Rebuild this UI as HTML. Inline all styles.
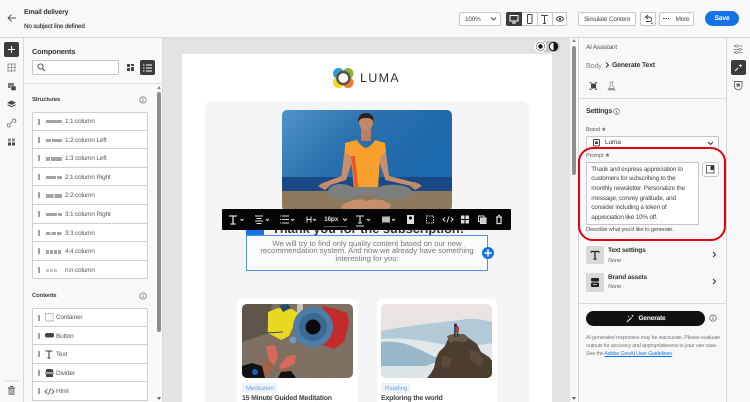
<!DOCTYPE html>
<html><head><meta charset="utf-8"><style>
html,body{margin:0;padding:0;width:750px;height:402px;overflow:hidden;background:#f8f8f8}
body{position:relative;font-family:"Liberation Sans",sans-serif;color:#2c2c2c;text-rendering:geometricPrecision;letter-spacing:-.2px}
.a{position:absolute;white-space:nowrap}
.t{position:absolute;white-space:nowrap;font-size:6.6px;line-height:10px;color:#444}
.b{font-weight:bold}
.row{position:absolute;left:32px;width:116px;height:18.6px;box-sizing:border-box;background:#fff;border:1px solid #cfcfcf;border-top:0}
.gr{position:absolute;left:5px;top:6px;width:2px;height:6px;background:#a0a0a0}
.bar{position:absolute;left:13px;top:8px;height:3.4px;width:15.5px;background:#a4a4a4}
.row span{position:absolute;top:5px;font-size:6.4px;line-height:10px;color:#555;white-space:nowrap;letter-spacing:-.15px}
.btn{position:absolute;box-sizing:border-box;border:1px solid #c6c6c6;border-radius:3px;background:#fff;font-size:6.4px;color:#444;text-align:center;line-height:13px;white-space:nowrap}
svg{position:absolute;overflow:visible}
</style></head><body>

<!-- canvas -->
<div class="a" style="left:163px;top:38px;width:415px;height:364px;background:#e3e3e3"></div>
<div class="a" style="left:182px;top:54px;width:370px;height:348px;background:#fff"></div>
<div class="a" style="left:205px;top:101px;width:324px;height:301px;background:#f5f5f5;border-radius:7px 7px 0 0"></div>

<!-- logo -->
<svg style="left:0;top:0" width="750" height="402" viewBox="0 0 750 402">
<circle cx="338.500" cy="73.500" r="5.500" fill="#2a9bd8"/>
<circle cx="348" cy="73.500" r="5.500" fill="#8fb23c"/>
<circle cx="348" cy="82.500" r="5.500" fill="#ee7b30"/>
<circle cx="338.500" cy="82.500" r="5.500" fill="#f3d91a"/>
<circle cx="343.300" cy="78" r="6" fill="none" stroke="#5a5048" stroke-width="2.400"/>
<circle cx="343.300" cy="78" r="4.800" fill="#fff"/>
</svg>
<div class="a" style="left:360px;top:70px;font-size:12.500px;line-height:16px;letter-spacing:1.300px;color:#333">LUMA</div>

<!-- hero -->
<svg style="left:282px;top:110px;border-radius:5px" width="170" height="101" viewBox="282 110 170 101">
<defs><linearGradient id="s" x1="0" y1="0" x2="1" y2="0.4"><stop offset="0" stop-color="#4f93c7"/><stop offset="0.5" stop-color="#2a70ad"/><stop offset="1" stop-color="#1c68ac"/></linearGradient>
<clipPath id="hc"><rect x="282" y="110" width="170" height="101" rx="5"/></clipPath></defs>
<g clip-path="url(#hc)">
<rect x="282" y="110" width="170" height="68" fill="url(#s)"/>
<rect x="282" y="177" width="170" height="15" fill="#1a4a86"/>
<rect x="282" y="191" width="170" height="20" fill="#8d7a5c"/>
<path d="M345 146l-3.500 30-21 8 .5 4 25-8 6-18 1-14zM385 146l4 30 31 8-.5 4-34-8-6-18-1-14z" fill="#c88f6c"/>
<path d="M318 186l7-4 6 3-6 5zM422 186l-7-4-6 3 6 5z" fill="#c58a68"/>
<rect x="361" y="128" width="10" height="13" fill="#b87f5f"/>
<ellipse cx="366" cy="122" rx="7" ry="8.500" fill="#c08868"/>
<path d="M358.500 122c-1-6 3-9 7.500-9s8.500 3 7.500 9c-1.500-3-3-4-7.500-4s-6 1-7.500 4z" fill="#2d211c"/>
<path d="M345 143l12-3c2 4 6 7 9 8 3-1 7-4 9-8l10 3 1 9-6 5-2 32h-24l-3-32-6-5z" fill="#f9a02c"/>
<path d="M351 156l4 31h3l-3-31z" fill="#e8562a"/>
<path d="M352 187c-8-5-23-4-24 5-1 7 8 9 25 6l13-3 13 3c17 3 34 1 33-6-1-8-25-9-33-5z" fill="#7d7f7c"/>
<path d="M341 206c10-7 20-8 26-5 8-3 17-2 24 4l-3 6h-44z" fill="#c88f6c"/>
</g></svg>

<!-- heading + selected text -->
<div class="a" style="left:272px;top:219.600px;width:191px;font-size:12.800px;line-height:18px;font-weight:bold;color:#333;text-align:center;letter-spacing:0">Thank you for the subscription!</div>
<div class="a" style="left:246px;top:229px;width:18px;height:6px;background:#1473e6"></div>
<div class="a" style="left:246px;top:235px;width:242px;height:36px;box-sizing:border-box;border:1.200px solid #4f90e6;background:#fbfbfb"></div>
<div class="a" style="left:246px;top:239.500px;width:242px;font-size:7.700px;line-height:7.600px;color:#777;text-align:center;letter-spacing:0;white-space:normal"><div>We will try to find only quality content based on our new</div><div>recommendation system. And now we already have something</div><div>interesting for you:</div></div>
<svg style="left:482px;top:247px" width="12" height="12" viewBox="0 0 12 12"><circle cx="6" cy="6" r="6" fill="#1473e6"/><path d="M6 2.500v7M2.500 6h7" stroke="#fff" stroke-width="1.500"/></svg>

<!-- toolbar -->
<div class="a" style="left:222px;top:209px;width:289px;height:21px;background:#050505;border-radius:1px"></div>
<svg style="left:0;top:0" width="750" height="402" viewBox="0 0 750 402">
<g fill="none" stroke="#ddd" stroke-width="1">
<path d="M229 216h8M233 216v8M230.500 224h5" stroke-width="1.300"/>
<path d="M240.500 219l1.500 1.500 1.500-1.500M266 219l1.500 1.500 1.500-1.500M291 219l1.500 1.500 1.500-1.500M313 219l1.500 1.500 1.500-1.500M343 218.500l2 2 2-2M367 219l1.500 1.500 1.500-1.500M392 219l1.500 1.500 1.500-1.500"/>
<path d="M255 216h8M256.500 218.500h5M255 221h8M256.500 223.500h5"/>
<path d="M282 216h7M282 219.500h7M282 223h7M280 216h1M280 219.500h1M280 223h1"/>
<path d="M307 216.500v6M311 216.500v6M307 219.500h4"/>
<path d="M324 226.500h23" stroke="#555"/>
<path d="M356 216h8M360 216v7M358 223h4M356 226h8" stroke-width="1.100"/>
<rect x="382" y="216.500" width="8" height="6" fill="#bbb" stroke="none"/>
<rect x="407" y="215" width="7" height="9" fill="#ddd" stroke="none"/><circle cx="410.500" cy="218" r="1.500" fill="#000" stroke="none"/>
<rect x="426.500" y="216" width="7" height="7" stroke-dasharray="1.500 1"/>
<path d="M445 217.500l-2 2 2 2M451 217.500l2 2-2 2M449 216.500l-2 6"/>
<g fill="#ddd" stroke="none"><rect x="461" y="215.500" width="3.500" height="3.500"/><rect x="465.500" y="215.500" width="3.500" height="3.500"/><rect x="461" y="220" width="3.500" height="3.500"/><rect x="465.500" y="220" width="3.500" height="3.500"/></g>
<rect x="478.500" y="216" width="5.500" height="5.500"/><rect x="480.500" y="218" width="5.500" height="5.500" fill="#ccc"/>
<path d="M496 217h6M497 217.500v6h4v-6M498 215.500h2" stroke-width="1.200"/>
</g></svg>
<div class="a" style="left:324px;top:215px;font-size:6.600px;line-height:10px;font-weight:bold;color:#ddd">16px</div>

<!-- cards -->
<div class="a" style="left:237px;top:299px;width:121px;height:103px;background:#fff;border-radius:5px 5px 0 0"></div>
<div class="a" style="left:377px;top:299px;width:120px;height:103px;background:#fff;border-radius:5px 5px 0 0"></div>
<svg style="left:242px;top:304px" width="111" height="74" viewBox="242 304 111 74">
<defs><clipPath id="c1"><rect x="242" y="304" width="111" height="74" rx="5"/></clipPath></defs>
<g clip-path="url(#c1)">
<rect x="242" y="304" width="111" height="74" fill="#7d7063"/>
<path d="M242 304h30l-6 30-24 8z" fill="#5f554b"/>
<path d="M268 312l10-4 14 1 6 4-3 10-6 13-8 4-13-7z" fill="#e8d820"/>
<path d="M279 305l9-1 3 4-8 4z" fill="#2b4a6b"/>
<rect x="297" y="304" width="6" height="10" fill="#c8c8b8"/>
<path d="M266 333l17-1" stroke="#26456b" stroke-width="1"/>
<circle cx="293" cy="340" r="3.500" fill="#6d9cc0"/>
<path d="M322 306l14 3 11 4 2 10-5 19-10 7-12-4 6-15z" fill="#c42a2a"/>
<circle cx="313" cy="327" r="20" fill="#4b7ea8"/>
<circle cx="313" cy="327" r="14" fill="#3b6a90"/>
<circle cx="313" cy="327" r="7.500" fill="#0a0a0a"/>
<path d="M266 346l9-1 3 12-4 8-5-4zM296 355l-9 1-8 11 4 4 12-8z" fill="#d9695a"/>
<path d="M262 362l9 0 3 6-8 10h-8zM282 369l5-2 4 3-3 8h-9z" fill="#a26449"/>
<path d="M242 366l10-3 10 3 3 12h-23zM278 378l3-6 10-1 5 7z" fill="#121212"/>
<circle cx="255" cy="372" r="3" fill="#1a62b8"/>
</g>
</svg>
<svg style="left:381px;top:304px" width="111" height="74" viewBox="381 304 111 74">
<defs><clipPath id="c3"><rect x="381" y="304" width="111" height="74" rx="5"/></clipPath><linearGradient id="g2" x1="0" y1="0" x2="0" y2="1"><stop offset="0" stop-color="#ebe4e0"/><stop offset="1" stop-color="#e3e2e0"/></linearGradient></defs>
<g clip-path="url(#c3)">
<rect x="381" y="304" width="111" height="74" fill="url(#g2)"/>
<path d="M381 331c15-3 30-5 45-7 14-2 30-3 40-5 10-1 18 1 26 3v24h-111z" fill="#b2cad8"/>
<path d="M381 339c20-2 40 1 60 5 20 3 36 2 51-1v20h-111z" fill="#e0e7e9"/>
<path d="M381 342c10-1 18 0 28 3 10 4 22 10 32 15l-20 8-40-2z" fill="#98b8ca"/>
<rect x="381" y="366" width="60" height="12" fill="#dde4e6"/>
<path d="M427 378l4-5 3-5 2-10 3-6 6-6 3-7 7-4 9 0 6 4 7 5 4 8 8 5 4 5v16z" fill="#4c3d31"/>
<path d="M447 336l6-2 11 0 5 4-4 4-10-1-5 2z" fill="#6a5a4a"/>
<path d="M470 350l8 2 6 8-5 6-9-6zM442 355l10 3-3 10-8-1z" fill="#5c4a3a"/>
<rect x="454" y="326" width="4" height="7" fill="#2d4f78"/>
<rect x="456" y="327" width="3" height="5" fill="#b5403a"/>
<circle cx="455.500" cy="325" r="1.500" fill="#3a2b22"/>
<path d="M454 333h1.500v4h-1.500zM457 333h1.500v4h-1.500z" fill="#333"/>
</g></svg>
<div class="a" style="left:242px;top:383px;width:35px;height:10px;background:#eef3fb;border-radius:2px"></div>
<div class="a" style="left:246px;top:383.500px;font-size:6px;line-height:10px;color:#6d9fe0;letter-spacing:0">Meditation</div>
<div class="a" style="left:381px;top:383px;width:29px;height:10px;background:#eef3fb;border-radius:2px"></div>
<div class="a" style="left:385px;top:383.500px;font-size:6px;line-height:10px;color:#6d9fe0;letter-spacing:0">Reading</div>
<div class="a" style="left:242px;top:393.500px;font-size:7px;line-height:10px;font-weight:bold;color:#444">15 Minute Guided Meditation</div>
<div class="a" style="left:381px;top:393.500px;font-size:7px;line-height:10px;font-weight:bold;color:#444">Exploring the world</div>

<!-- theme toggle -->
<div class="a" style="left:538px;top:41px;width:22px;height:11px;background:#c4c4c4;border-radius:6px"></div>
<svg style="left:534px;top:40px" width="28" height="13" viewBox="0 0 28 13"><circle cx="6.500" cy="6.500" r="6" fill="#fff"/><circle cx="6.500" cy="6.500" r="2.200" fill="#111"/><circle cx="6.500" cy="6.500" r="4.200" fill="none" stroke="#222" stroke-width="1" stroke-dasharray="1 1.200"/><circle cx="19.500" cy="6.500" r="4.200" fill="#f3f3f3" stroke="#111"/><path d="M19.500 2.300a4.200 4.200 0 0 1 0 8.400z" fill="#111"/></svg>

<!-- canvas scrollbar -->
<div class="a" style="left:570px;top:38px;width:8px;height:364px;background:#f8f8f8"></div>
<div class="a" style="left:572px;top:46px;width:4px;height:129px;background:#8e8e8e;border-radius:2px"></div>
<div class="a" style="left:572px;top:39px;border:2px solid transparent;border-bottom:3px solid #888;border-top:0"></div>
<div class="a" style="left:572px;top:397px;border:2px solid transparent;border-top:3px solid #666;border-bottom:0"></div>

<!-- header -->
<div class="a" style="left:0;top:0;width:750px;height:38px;background:#f8f8f8;border-bottom:1px solid #d8d8d8;box-sizing:border-box"></div>
<svg style="left:7px;top:13px" width="10" height="10" viewBox="0 0 10 10"><path d="M9 5H1M4.500 1.500L1 5l3.500 3.500" fill="none" stroke="#555" stroke-width=".9"/></svg>
<div class="t b" style="left:24px;top:8px;font-size:7px;color:#333">Email delivery</div>
<div class="t" style="left:24px;top:21.500px;font-size:6.300px;color:#333;letter-spacing:-.13px;-webkit-text-stroke:.15px #333">No subject line defined</div>

<div class="btn" style="left:459px;top:12px;width:42px;height:14px;text-align:left;padding-left:5px;border-radius:2px">100%</div>
<svg style="left:490px;top:17px" width="7" height="4" viewBox="0 0 7 4"><path d="M1 .5l2.500 2.500L6 .5" fill="none" stroke="#444" stroke-width=".9"/></svg>

<div class="a" style="left:506px;top:12px;width:61px;height:14px;box-sizing:border-box;background:#fff;border:1px solid #c6c6c6;border-radius:2px"></div>
<div class="a" style="left:506px;top:12px;width:16px;height:14px;background:#3c3c3c;border-radius:2px 0 0 2px"></div>
<div class="a" style="left:537px;top:12px;width:1px;height:14px;background:#c6c6c6"></div>
<div class="a" style="left:552px;top:12px;width:1px;height:14px;background:#c6c6c6"></div>
<svg style="left:0;top:0" width="750" height="402" viewBox="0 0 750 402">
<rect x="510" y="15.500" width="8" height="5.500" fill="none" stroke="#fff" stroke-width="1"/><path d="M512 23h4M514 21v2" stroke="#fff"/>
<rect x="527.500" y="14.500" width="4.500" height="9" rx=".7" fill="none" stroke="#444"/>
<path d="M541 15.500h7M544.500 15.500v8M543 23.500h3" stroke="#444" fill="none" stroke-width="1"/>
<path d="M556.500 19c1-2 2.500-2.500 3.500-2.500s2.500.5 3.500 2.500c-1 1.800-2.500 2.300-3.500 2.300s-2.500-.5-3.500-2.300z" fill="none" stroke="#444"/><circle cx="560" cy="19" r="1.200" fill="#444"/>
</svg>

<div class="btn" style="left:578px;top:12px;width:58px;height:14px;border-radius:2px">Simulate Content</div>
<div class="btn" style="left:640px;top:12px;width:16px;height:14px;border-radius:2px"></div>
<svg style="left:643px;top:14px" width="11" height="11" viewBox="0 0 11 11"><path d="M5 1L2.500 3 5 5M2.500 3H6c2 0 2.500 1.300 2.500 2.500S8 7.500 6 7.500H3" fill="none" stroke="#444" stroke-width=".9"/><path d="M8 9.200h2" stroke="#444"/></svg>
<div class="btn" style="left:659px;top:12px;width:35px;height:14px;border-radius:2px;padding-left:12px">More</div>
<div class="a" style="left:663px;top:18px;width:6px;height:1.400px;background:repeating-linear-gradient(90deg,#444 0 1.400px,transparent 1.400px 2.400px)"></div>
<div class="a" style="left:705px;top:11px;width:34px;height:15px;background:#1473e6;border-radius:8px;color:#fff;font-size:6.800px;font-weight:bold;line-height:15px;text-align:center">Save</div>

<!-- left rail -->
<div class="a" style="left:0;top:38px;width:24px;height:364px;background:#f8f8f8;border-right:1px solid #d8d8d8;box-sizing:border-box"></div>
<div class="a" style="left:4px;top:42px;width:15px;height:15px;background:#3c3c3c;border-radius:2px"></div>
<svg style="left:0;top:0" width="24" height="402" viewBox="0 0 24 402">
<path d="M11.500 46v7M8 49.500h7" stroke="#fff" stroke-width="1.100"/>
<rect x="8" y="64" width="7" height="7" fill="none" stroke="#888" stroke-width=".9"/><path d="M11.500 64v7M8 67.500h7" stroke="#888" stroke-width=".7"/>
<rect x="8" y="83" width="6" height="5" fill="#777"/><rect x="11" y="86" width="5" height="4.500" fill="#444" stroke="#f8f8f8" stroke-width=".5"/>
<path d="M11.500 100.500l4.500 2.200-4.500 2.200-4.500-2.200zM7 105l4.500 2.200L16 105l-1.200-.6-3.300 1.700-3.300-1.700z" fill="#444"/>
<path d="M9 125l4-4M8.500 123l-.8.800a1.800 1.800 0 0 0 2.600 2.600l.8-.8M14.500 123l.8-.8a1.800 1.800 0 0 0-2.600-2.600l-.8.800" fill="none" stroke="#777" stroke-width=".9"/>
<g fill="#444"><rect x="8" y="138.500" width="3" height="3" fill="#888"/><rect x="12" y="138.500" width="3" height="3" fill="#888"/><rect x="8" y="142.500" width="3" height="3"/><rect x="12" y="142.500" width="3" height="3"/></g>
<path d="M4 381h15" stroke="#ddd"/>
<rect x="8.500" y="388" width="6" height="7" fill="#999"/><path d="M8 388h7M10 386.500h3" stroke="#555"/><path d="M10 390h3M10 392h3" stroke="#fff" stroke-width=".6"/>
</svg>

<!-- components panel -->
<div class="a" style="left:24px;top:38px;width:139px;height:364px;background:#f9f9f9;border-right:1px solid #d8d8d8;box-sizing:border-box"></div>
<div class="t b" style="left:32px;top:46.700px;font-size:7.400px;color:#333">Components</div>
<div class="a" style="left:32px;top:60px;width:87px;height:15px;box-sizing:border-box;background:#fff;border:1px solid #c6c6c6;border-radius:2px"></div>
<svg style="left:37px;top:63px" width="9" height="9" viewBox="0 0 9 9"><circle cx="3.500" cy="3.500" r="2.600" fill="none" stroke="#444" stroke-width=".9"/><path d="M5.500 5.500L8 8" stroke="#444" stroke-width="1"/></svg>
<svg style="left:126px;top:63px" width="9" height="9" viewBox="0 0 9 9"><g fill="#444"><rect x="1" y="1" width="3" height="3"/><rect x="5" y="1" width="3" height="2"/><rect x="1" y="5" width="3" height="3"/><rect x="5" y="4" width="3" height="4"/></g></svg>
<div class="a" style="left:140px;top:60px;width:15px;height:15px;background:#3c3c3c;border-radius:2px"></div>
<svg style="left:143px;top:63.500px" width="9" height="8" viewBox="0 0 9 8"><path d="M0 1h1.500M3 1h6M0 4h1.500M3 4h6M0 7h1.500M3 7h6" stroke="#fff" stroke-width="1.100"/></svg>
<div class="a" style="left:24px;top:83px;width:138px;height:1px;background:#e0e0e0"></div>
<div class="t b" style="left:32px;top:95px;font-size:6px;color:#444">Structures</div>
<svg style="left:139px;top:96px" width="8" height="8" viewBox="0 0 8 8"><circle cx="4" cy="4" r="3.200" fill="none" stroke="#666" stroke-width=".7"/><path d="M4 3.500v2.500" stroke="#666" stroke-width=".8"/><circle cx="4" cy="2.300" r=".5" fill="#666"/></svg>
<div class="a" style="left:157px;top:92px;width:4px;height:240px;background:#8e8e8e;border-radius:2px"></div>
<div class="a" style="left:157px;top:86px;border:2px solid transparent;border-bottom:3px solid #888;border-top:0"></div>
<div class="a" style="left:157px;top:397px;border:2px solid transparent;border-top:3px solid #666;border-bottom:0"></div>

<div class="row" style="top:112px;border-top:1px solid #cfcfcf;border-radius:2px 2px 0 0"><i class="gr"></i><i class="bar" style="top:7px"></i><span style="left:32px;top:4px">1:1 column</span></div>
<div class="row" style="top:130.600px"><i class="gr"></i><i class="bar" style="background:linear-gradient(90deg,#a4a4a4 0 5px,#fff 5px 6px,#a4a4a4 6px)"></i><span style="left:32px">1:2 column Left</span></div>
<div class="row" style="top:149.200px"><i class="gr"></i><i class="bar" style="background:linear-gradient(90deg,#a4a4a4 0 4px,#fff 4px 5px,#a4a4a4 5px)"></i><span style="left:32px">1:3 column Left</span></div>
<div class="row" style="top:167.800px"><i class="gr"></i><i class="bar" style="background:linear-gradient(90deg,#a4a4a4 0 10px,#fff 10px 11px,#a4a4a4 11px)"></i><span style="left:32px">2:1 column Right</span></div>
<div class="row" style="top:186.400px"><i class="gr"></i><i class="bar" style="background:linear-gradient(90deg,#a4a4a4 0 7.300px,#fff 7.300px 8.300px,#a4a4a4 8.300px)"></i><span style="left:32px">2:2 column</span></div>
<div class="row" style="top:205px"><i class="gr"></i><i class="bar" style="background:linear-gradient(90deg,#a4a4a4 0 11px,#fff 11px 12px,#a4a4a4 12px)"></i><span style="left:32px">3:1 column Right</span></div>
<div class="row" style="top:223.600px"><i class="gr"></i><i class="bar" style="background:repeating-linear-gradient(90deg,#a4a4a4 0 4.500px,#fff 4.500px 5.500px)"></i><span style="left:32px">3:3 column</span></div>
<div class="row" style="top:242.200px"><i class="gr"></i><i class="bar" style="background:repeating-linear-gradient(90deg,#a4a4a4 0 3px,#fff 3px 4px)"></i><span style="left:32px">4:4 column</span></div>
<div class="row" style="top:260.800px;border-radius:0 0 2px 2px"><i class="gr"></i><i class="bar" style="width:12px;background:repeating-linear-gradient(90deg,#c8c8c8 0 3px,#fff 3px 4px)"></i><span style="left:32px">n:n column</span></div>

<div class="t b" style="left:32px;top:291px;font-size:6px;color:#444">Contents</div>
<svg style="left:139px;top:292px" width="8" height="8" viewBox="0 0 8 8"><circle cx="4" cy="4" r="3.200" fill="none" stroke="#666" stroke-width=".7"/><path d="M4 3.500v2.500" stroke="#666" stroke-width=".8"/><circle cx="4" cy="2.300" r=".5" fill="#666"/></svg>
<div class="row" style="top:308px;border-top:1px solid #cfcfcf;border-radius:2px 2px 0 0"><i class="gr"></i><span style="left:23px;top:4px">Container</span></div>
<div class="row" style="top:326.600px"><i class="gr"></i><span style="left:23px">Button</span></div>
<div class="row" style="top:345.200px"><i class="gr"></i><span style="left:23px">Text</span></div>
<div class="row" style="top:363.800px"><i class="gr"></i><span style="left:23px">Divider</span></div>
<div class="row" style="top:382.400px"><i class="gr"></i><span style="left:23px">Html</span></div>
<svg style="left:0;top:0" width="170" height="402" viewBox="0 0 170 402">
<rect x="45.500" y="313.500" width="7.500" height="7.500" fill="none" stroke="#666" stroke-width=".7" stroke-dasharray="1.300 1"/>
<rect x="45" y="333" width="9" height="4.500" rx="2" fill="#444"/>
<path d="M45.500 351h7M49 351v7M47.500 358h3" fill="none" stroke="#333" stroke-width="1"/>
<path d="M46.500 369h6l1 3h-8z" fill="#444"/><path d="M45 373h9" stroke="#444"/><rect x="46" y="374" width="7" height="3" fill="#444"/>
<path d="M47.500 389l-2.500 2.500 2.500 2.500M51.500 389l2.500 2.500-2.500 2.500M50.500 388.500l-2 6" fill="none" stroke="#444" stroke-width=".8"/>
</svg>

<!-- right panel -->
<div class="a" style="left:578px;top:38px;width:149px;height:364px;background:#f8f8f8;border-left:1px solid #d4d4d4;border-right:1px solid #d4d4d4;box-sizing:border-box"></div>
<div class="a" style="left:727px;top:38px;width:23px;height:364px;background:#f8f8f8"></div>
<div class="t" style="left:586px;top:42.500px;font-size:6.400px;color:#555">AI Assistant</div>
<div class="t" style="left:586px;top:60.500px;font-size:7.200px;color:#888">Body</div>
<svg style="left:605px;top:62px" width="5" height="6" viewBox="0 0 5 6"><path d="M1 .5l2.500 2.500L1 5.500" fill="none" stroke="#333" stroke-width="1"/></svg>
<div class="t b" style="left:612px;top:60.500px;font-size:6.900px;color:#333">Generate Text</div>
<svg style="left:0;top:0" width="750" height="402" viewBox="0 0 750 402">
<path d="M590 83.500v-1h1.500M595 82.500h1.500v1M596.500 88.500v1h-1.500M591.500 89.500H590v-1" fill="none" stroke="#444" stroke-width=".8"/><rect x="591" y="83.500" width="5" height="5" fill="#444"/>
<path d="M609.500 82h4M610.500 82v3l-2.500 5h7l-2.500-5v-3" fill="none" stroke="#999" stroke-width=".8"/><path d="M609 88l-1 2h7l-1-2z" fill="#999"/>
</svg>
<div class="a" style="left:579px;top:98px;width:147px;height:1px;background:#dcdcdc"></div>

<svg style="left:0;top:0" width="750" height="402" viewBox="0 0 750 402">
<path d="M733.500 46h9M733.500 49.500h9M733.500 52.500h9" stroke="#777" stroke-width=".8"/><rect x="735.500" y="45" width="2" height="2" fill="#f8f8f8" stroke="#777" stroke-width=".6"/><rect x="739" y="48.500" width="2" height="2" fill="#f8f8f8" stroke="#777" stroke-width=".6"/><rect x="735.500" y="51.500" width="2" height="2" fill="#f8f8f8" stroke="#777" stroke-width=".6"/>
<rect x="731" y="60" width="15" height="15" rx="2" fill="#3c3c3c"/>
<path d="M735 71l3-3" stroke="#fff" stroke-width="1.100"/><path d="M740.500 63.500l.6 1.500 1.500.6-1.500.6-.6 1.500-.6-1.500-1.500-.6 1.500-.6z" fill="#fff"/>
<path d="M734.500 81.500h7.500v5c0 1.800-2 3-3.750 3.500-1.750-.5-3.750-1.700-3.750-3.500z" fill="none" stroke="#666" stroke-width=".9"/><rect x="736.500" y="83.500" width="3.500" height="3" fill="#666"/>
</svg>

<div class="t b" style="left:586px;top:106.500px;font-size:7px;color:#333">Settings</div>
<svg style="left:613px;top:108px" width="7" height="7" viewBox="0 0 7 7"><circle cx="3.500" cy="3.500" r="2.800" fill="none" stroke="#666" stroke-width=".6"/><path d="M3.500 3v2.300" stroke="#666" stroke-width=".7"/><circle cx="3.500" cy="1.900" r=".4" fill="#666"/></svg>
<div class="t" style="left:586px;top:125px;font-size:5.600px;color:#666">Brand ★</div>
<div class="a" style="left:586px;top:136px;width:133px;height:20px;box-sizing:border-box;background:#fff;border:1px solid #c6c6c6;border-radius:2px"></div>
<svg style="left:593px;top:139px" width="8" height="8" viewBox="0 0 8 8"><rect x=".5" y=".5" width="6" height="6.500" rx="1" fill="none" stroke="#444"/><rect x="2" y="2.500" width="3" height="2.500" fill="#444"/></svg>
<div class="t" style="left:605px;top:138px;font-size:6.600px;color:#333">Luma</div>
<svg style="left:707px;top:141px" width="7" height="5" viewBox="0 0 7 5"><path d="M1 1l2.500 2.500L6 1" fill="none" stroke="#333"/></svg>

<div class="a" style="left:579px;top:148px;width:147px;height:94px;background:#f8f8f8"></div>
<div class="t" style="left:586px;top:151px;font-size:5.800px;color:#666">Prompt ★</div>
<div class="a" style="left:586px;top:162px;width:113px;height:63px;box-sizing:border-box;background:#fff;border:1px solid #c6c6c6;border-radius:1px"></div>
<div class="a" style="left:591.300px;top:164.500px;font-size:6.400px;line-height:9.700px;color:#444"><div>Thank and express appreciation to</div><div>customers for subscribing to the</div><div>monthly newsletter. Personalize the</div><div>message, convey gratitude, and</div><div>consider including a token of</div><div>appreciation like 10% off.</div></div>
<div class="a" style="left:702px;top:162px;width:17px;height:15px;box-sizing:border-box;background:#fff;border:1px solid #c6c6c6;border-radius:3px"></div>
<svg style="left:706px;top:165px" width="9" height="9" viewBox="0 0 9 9"><rect x=".5" y=".5" width="7.500" height="7.500" fill="none" stroke="#444" stroke-width=".8"/><rect x="4.500" y=".5" width="3.500" height="4.500" fill="#333"/></svg>
<div class="t" style="left:586px;top:225px;font-size:5.800px;color:#555">Describe what you'd like to generate.</div>
<div class="a" style="left:578px;top:147px;width:148px;height:94px;box-sizing:border-box;border:2.200px solid #e3000f;border-radius:15px"></div>

<div class="a" style="left:586px;top:246px;width:18px;height:18px;background:#d8d8d8;border-radius:2px"></div>
<svg style="left:590px;top:250px" width="10" height="10" viewBox="0 0 10 10"><path d="M1 1.500h8M5 1.500v7.500M3.500 9h3M1 1.500v1.200M9 1.500v1.200" fill="none" stroke="#222" stroke-width="1.300"/></svg>
<div class="t b" style="left:608px;top:246px;font-size:6.600px;color:#333">Text settings</div>
<div class="t" style="left:608px;top:255.500px;font-size:5.800px;font-style:italic;color:#666">None</div>
<svg style="left:712px;top:251px" width="5" height="7" viewBox="0 0 5 7"><path d="M1 1l2.500 2.500L1 6" fill="none" stroke="#333" stroke-width="1"/></svg>
<div class="a" style="left:586px;top:273px;width:18px;height:19px;background:#d8d8d8;border-radius:2px"></div>
<svg style="left:590px;top:277px" width="10" height="11" viewBox="0 0 10 11"><rect x="1" y="1" width="8" height="3.500" rx="1" fill="#222"/><rect x="1" y="5.500" width="8" height="4.500" rx="1" fill="#222"/><path d="M3 7.500h4" stroke="#d8d8d8" stroke-width=".8"/></svg>
<div class="t b" style="left:608px;top:272.500px;font-size:6.600px;color:#333">Brand assets</div>
<div class="t" style="left:608px;top:282px;font-size:5.800px;font-style:italic;color:#666">None</div>
<svg style="left:712px;top:278px" width="5" height="7" viewBox="0 0 5 7"><path d="M1 1l2.500 2.500L1 6" fill="none" stroke="#333" stroke-width="1"/></svg>
<div class="a" style="left:579px;top:303px;width:147px;height:1px;background:#dcdcdc"></div>

<div class="a" style="left:586px;top:311px;width:119px;height:15px;background:#111;border-radius:8px;color:#fff;font-size:6.600px;font-weight:bold;line-height:15px;text-align:center;text-indent:13px">Generate</div>
<svg style="left:626px;top:314px" width="9" height="9" viewBox="0 0 9 9"><path d="M1 8l4.500-4.500" stroke="#fff" stroke-width="1"/><path d="M6.500.5l.4 1 1 .4-1 .4-.4 1-.4-1-1-.4 1-.4zM2.500 1.500l.3.700.7.300-.7.300-.3.700-.3-.700-.7-.3.700-.3z" fill="#fff"/></svg>
<svg style="left:709px;top:314px" width="8" height="8" viewBox="0 0 8 8"><circle cx="4" cy="4" r="3.200" fill="none" stroke="#555" stroke-width=".7"/><path d="M4 3.500v2.500" stroke="#555" stroke-width=".8"/><circle cx="4" cy="2.300" r=".5" fill="#555"/></svg>
<div class="a" style="left:586px;top:333.500px;font-size:5.450px;line-height:8.300px;color:#777"><div>AI generated responses may be inaccurate. Please evaluate</div><div>outputs for accuracy and appropriateness to your use case.</div><div>See the <span style="color:#1473e6;text-decoration:underline">Adobe GenAI User Guidelines</span>.</div></div>

</body></html>
